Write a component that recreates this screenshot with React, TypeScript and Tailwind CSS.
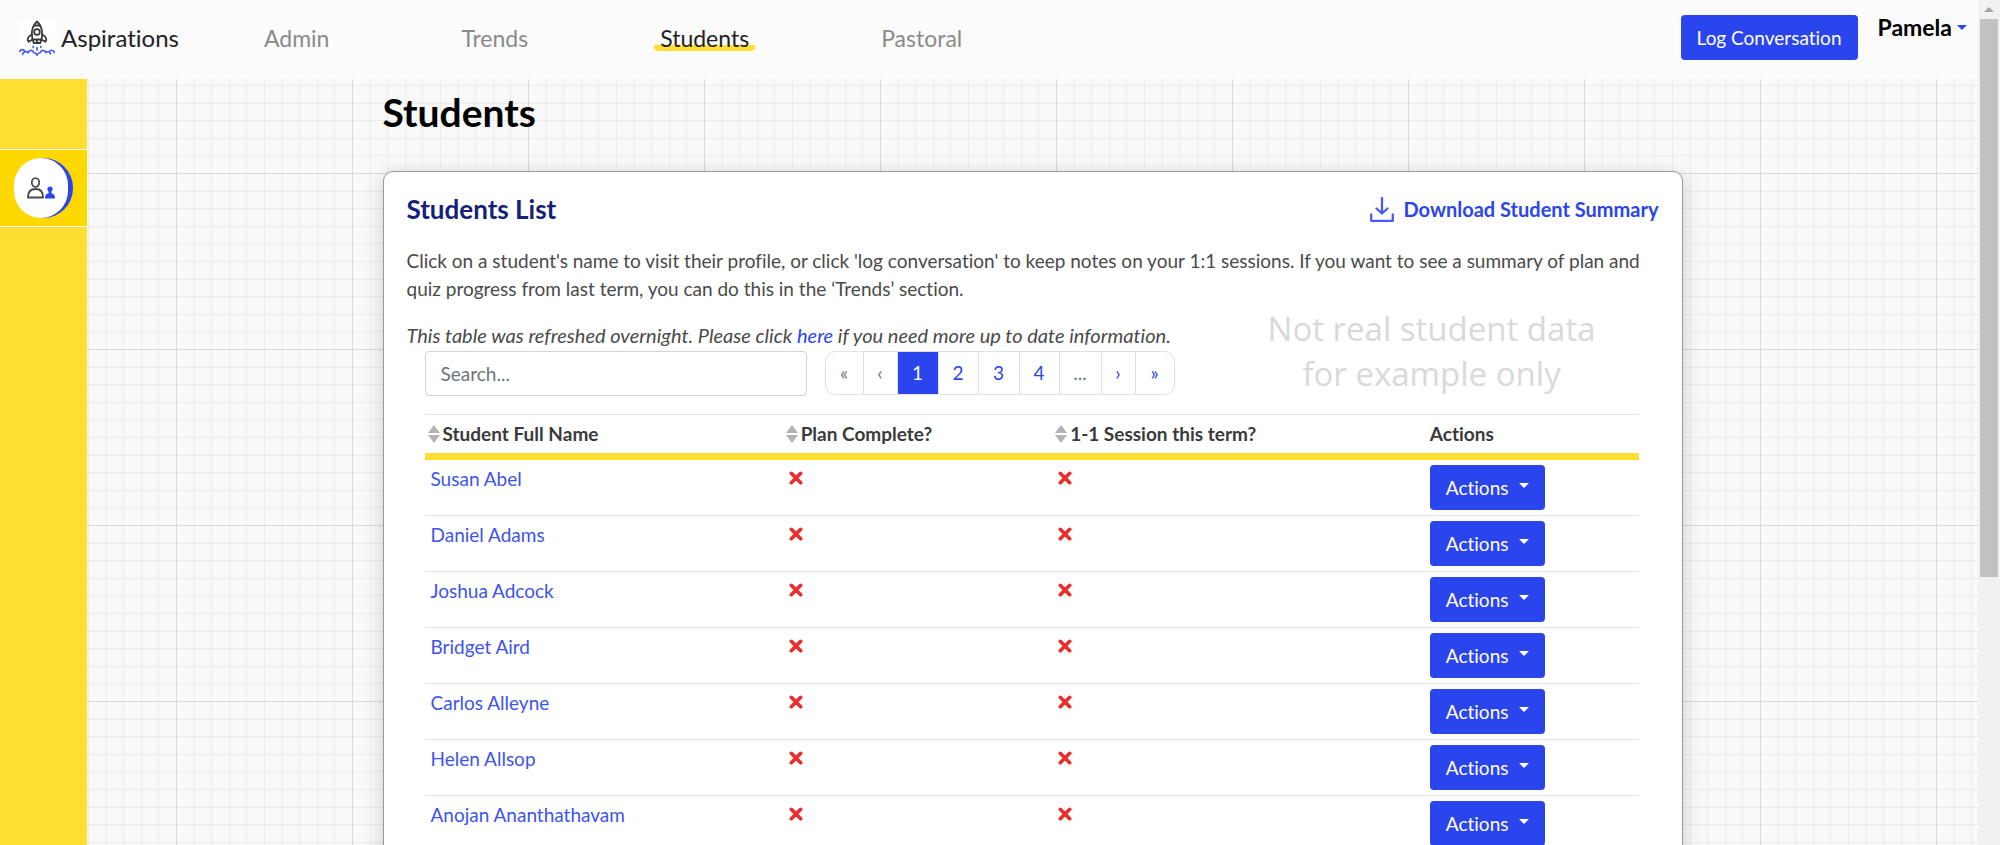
import { useState } from 'react'

interface Student {
  id: number
  name: string
  planComplete: boolean
  sessionThisTerm: boolean
}

const students: Student[] = [
  { id: 1, name: 'Susan Abel', planComplete: false, sessionThisTerm: false },
  { id: 2, name: 'Daniel Adams', planComplete: false, sessionThisTerm: false },
  { id: 3, name: 'Joshua Adcock', planComplete: false, sessionThisTerm: false },
  { id: 4, name: 'Bridget Aird', planComplete: false, sessionThisTerm: false },
  { id: 5, name: 'Carlos Alleyne', planComplete: false, sessionThisTerm: false },
  { id: 6, name: 'Helen Allsop', planComplete: false, sessionThisTerm: false },
  { id: 7, name: 'Anojan Ananthathavam', planComplete: false, sessionThisTerm: false }
]

const navItems = ['Admin', 'Trends', 'Students', 'Pastoral']

const pages = [
  { label: '«', name: 'First page', className: 'w-[38px] text-[#6c757d]' },
  { label: '‹', name: 'Previous page', className: 'w-[34px] text-[#6c757d]' },
  { label: '1', name: 'Page 1', className: 'w-[41px] bg-[#2b45ee] text-white' },
  { label: '2', name: 'Page 2', className: 'w-10 text-[#2b45ee]' },
  { label: '3', name: 'Page 3', className: 'w-[41px] text-[#2b45ee]' },
  { label: '4', name: 'Page 4', className: 'w-10 text-[#2b45ee]' },
  { label: '...', name: 'More pages', className: 'w-[42px] text-[#6c757d]' },
  { label: '›', name: 'Next page', className: 'w-[34px] text-[#2b45ee]' },
  { label: '»', name: 'Last page', className: 'w-[38px] text-[#2b45ee]' }
]

function RocketLogo() {
  return (
    <svg viewBox="0 0 36 36" className="size-9 shrink-0" fill="none" strokeLinecap="round" aria-hidden="true">
      <rect width="36" height="36" fill="#fff" />
      <g stroke="#3a3a3a" strokeWidth="1.8" strokeLinejoin="round">
        <path d="M18 1.500c-3.600 3.500-5.200 8-5.200 12.500 0 3.500.8 6.500 2 9h6.400c1.200-2.500 2-5.500 2-9 0-4.500-1.600-9-5.200-12.500z" />
        <path d="M15.200 5.500h5.600" />
        <circle cx="18" cy="12" r="2.800" />
        <path d="M13 14.500c-3 1.500-4.300 3.500-4.300 5.500l1 1.800 4-2.300" />
        <path d="M23 14.500c3 1.500 4.300 3.500 4.300 5.500l-1 1.800-4-2.300" />
        <path d="M14.200 19.500h7.600M18 19.500v3" />
      </g>
      <g stroke="#4a5cf0" strokeWidth="1.700">
        <path d="M14.200 26.500v1M18 27.500v2.500M21.800 26.500v1" />
        <path d="M.8 31.500c.5-2.500 4.500-2.500 4.700.2M3.500 34.500c.5-3 4-3.500 5.500-2 1.500-3 5-2.500 5.500 0 2 0 2.700 1 3.500 2.500.8-1.500 1.500-2.500 3.500-2.500.5-2.500 4-3 5.500 0 1.500-1.500 4-1 4.500 1.500M35.200 32.500c-.5-3-4.500-3-4.700 0" />
      </g>
    </svg>
  )
}

function PeopleIcon() {
  return (
    <svg viewBox="0 0 28 22" className="h-[22px] w-7" aria-hidden="true">
      <g fill="none" stroke="#4a4a4a" strokeWidth="1.800">
        <ellipse cx="8.500" cy="5.500" rx="3.700" ry="4.300" />
        <path d="M.9 20.500c0-5.500 3-8.500 7.600-8.500s7.600 3 7.600 8.500z" strokeLinejoin="round" />
      </g>
      <g fill="#2b45ee">
        <circle cx="23" cy="12" r="2.600" />
        <path d="M18 21.500c0-3.600 1.300-4.800 3.600-5.300v-2.200h2.800v2.200c2.300.5 3.600 1.700 3.600 5.300z" />
      </g>
    </svg>
  )
}

function DownloadIcon() {
  return (
    <svg viewBox="0 0 24 25" className="h-[25px] w-6" fill="none" stroke="#4a5cf0" strokeWidth="2.300" strokeLinecap="round" strokeLinejoin="round" aria-hidden="true">
      <path d="M12 1v15M6.500 11.500 12 16.500l5.500-5" />
      <path d="M1.200 17.500v6.300h21.600v-6.300" />
    </svg>
  )
}

function SortIcon() {
  return (
    <svg viewBox="0 0 12 18" className="h-[18px] w-3 shrink-0" fill="#b3b3b3" aria-hidden="true">
      <path d="M6 0l6 8H0zM6 18l6-8H0z" />
    </svg>
  )
}

function Caret({ className }: { className: string }) {
  return (
    <svg viewBox="0 0 10 5" className={className} fill="currentColor" aria-hidden="true">
      <path d="M0 0h10L5 5z" />
    </svg>
  )
}

function StatusMark({ done }: { done: boolean }) {
  if (done) {
    return <span>Yes</span>
  }
  return (
    <svg viewBox="0 0 14 14" className="my-[6px] ml-px size-[14px]" stroke="#ee2b2b" strokeWidth="3.600" strokeLinecap="round" role="img" aria-label="No">
      <path d="M2.300 2.300l9.400 9.400M11.700 2.300l-9.400 9.400" />
    </svg>
  )
}

function Header() {
  return (
    <header className="flex h-[79px] shrink-0 items-start justify-between bg-[#fbfbfb] pr-[11px] pl-[19px]">
      <div className="flex h-[75px] items-center">
        <a href="#home" className="flex items-center gap-[6px] text-2xl leading-[34px] text-[#222]">
          <RocketLogo />
          Aspirations
        </a>
        <nav className="ml-[79px] flex gap-[120px] text-[23px] leading-[26px]">
          {navItems.map((item) => (
            <a
              key={item}
              href={`#${item.toLowerCase()}`}
              className={
                item === 'Students'
                  ? 'rounded bg-linear-to-t from-[#ffde32] from-[6px] to-transparent to-[6px] px-[6px] text-[#222]'
                  : 'px-[6px] text-[#8a8a8a]'
              }
            >
              {item}
            </a>
          ))}
        </nav>
      </div>
      <div className="flex items-start gap-5">
        <button type="button" className="mt-[15px] h-[45px] rounded bg-[#2b45ee] px-4 text-[19px] text-white">
          Log Conversation
        </button>
        <button type="button" className="mt-[11px] flex items-center gap-[5px] text-[23px] leading-8 font-bold text-black">
          Pamela
          <Caret className="h-[5px] w-[10px] text-[#2b45ee]" />
        </button>
      </div>
    </header>
  )
}

function Sidebar() {
  return (
    <aside className="w-[87px] shrink-0 bg-[#ffde32] pt-[70px]">
      <a href="#students" aria-label="Students" className="flex h-[78px] items-center border-y border-white bg-[#ffd800] pl-[14px]">
        <span className="flex h-[60px] w-[59px] rounded-full bg-[#2b45ee]">
          <span className="flex h-[60px] w-[54px] items-center justify-center rounded-full bg-white">
            <PeopleIcon />
          </span>
        </span>
      </a>
    </aside>
  )
}

function StudentsTable({ rows }: { rows: Student[] }) {
  return (
    <table className="w-full table-fixed border-collapse">
      <thead>
        <tr className="border-t border-b-[7px] border-t-[#dee2e6] border-b-[#ffde32] text-left text-[#3a3a3a]">
          <th className="w-[29.5%] px-[3px] py-[5px] font-bold">
            <span className="flex items-center gap-[3px]"><SortIcon />Student Full Name</span>
          </th>
          <th className="w-[22.2%] px-[3px] py-[5px] font-bold">
            <span className="flex items-center gap-[3px]"><SortIcon />Plan Complete?</span>
          </th>
          <th className="w-[30.7%] px-[3px] py-[5px] font-bold">
            <span className="flex items-center gap-[3px]"><SortIcon />1-1 Session this term?</span>
          </th>
          <th className="px-[5px] py-[5px] font-bold">Actions</th>
        </tr>
      </thead>
      <tbody>
        {rows.map((student) => (
          <tr key={student.id} className="border-b border-[#dee2e6] align-top">
            <td className="px-[6px] py-[5px]">
              <a href={`#student-${student.id}`} className="text-[#3d53ee]">{student.name}</a>
            </td>
            <td className="px-[5px] py-[5px]"><StatusMark done={student.planComplete} /></td>
            <td className="px-[5px] py-[5px]"><StatusMark done={student.sessionThisTerm} /></td>
            <td className="px-[5px] py-[5px]">
              <button type="button" className="flex h-[45px] w-[115px] items-center justify-between rounded bg-[#2b45ee] px-4 text-[19px] text-white">
                Actions
                <Caret className="mb-1 h-[5px] w-[10px]" />
              </button>
            </td>
          </tr>
        ))}
      </tbody>
    </table>
  )
}

// Track and thumb beside the page content
function ScrollTrack() {
  return (
    <div className="flex w-[22px] shrink-0 flex-col items-center bg-[#f1f1f1]" aria-hidden="true">
      <div className="flex h-[19px] items-center">
        <Caret className="h-[5px] w-[10px] rotate-180 text-[#a3a3a3]" />
      </div>
      <div className="h-[66%] w-[18px] bg-[#c1c1c1]" />
    </div>
  )
}

function App() {
  const [search, setSearch] = useState('')

  const filtered = students.filter((student) =>
    student.name.toLowerCase().includes(search.toLowerCase())
  )

  return (
    <div className="flex h-screen overflow-hidden font-['Lato','Open_Sans',sans-serif] text-[19px] leading-7 text-[#4a4a4a] [font-variant-ligatures:no-common-ligatures]">
      <div className="flex min-w-0 flex-1 flex-col">
        <Header />
        <div className="flex min-h-0 flex-1 bg-[#f9f9f9] bg-[linear-gradient(90deg,#d9d9d9_1px,transparent_1px),linear-gradient(#d9d9d9_1px,transparent_1px),repeating-linear-gradient(90deg,#ececec_0_1px,transparent_1px_10%),repeating-linear-gradient(#ececec_0_1px,transparent_1px_10%)] bg-[length:176px_176px] bg-[position:0_94px]">
          <Sidebar />
          <main className="min-w-0 flex-1 overflow-y-auto px-8 pt-[11px] [scrollbar-width:none]">
            <div className="mx-auto max-w-[1300px]">
              <h1 className="text-[39px] leading-[44px] font-bold text-black">Students</h1>

              <section className="relative mt-[37px] rounded-[10px] border border-[#999] bg-white px-[23px] pt-[23px] pb-6 shadow-[0_4px_20px_rgba(0,0,0,0.18)]">
                <div className="flex items-center justify-between">
                  <h2 className="text-[26px] leading-7 font-bold text-[#151f7a]">Students List</h2>
                  <a href="#download" className="flex items-center gap-[10px] text-xl leading-7 font-bold text-[#2b45ee]">
                    <DownloadIcon />
                    Download Student Summary
                  </a>
                </div>

                <p className="mt-6">
                  Click on a student's name to visit their profile, or click 'log conversation' to keep notes on your 1:1 sessions. If you want to see a summary of plan and quiz progress from last term, you can do this in the ‘Trends’ section.
                </p>
                <p className="mt-[18px] mb-[2px] text-xl leading-7 italic">
                  This table was refreshed overnight. Please click <a href="#refresh" className="text-[#2b45ee]">here</a> if you need more up to date information.
                </p>

                {/* Watermark */}
                <p className="absolute top-[134px] right-[86px] text-center font-['Open_Sans',sans-serif] text-[33px] leading-[45px] text-[#d9d9d9]">
                  Not real student data<br />for example only
                </p>

                <div className="pr-5 pl-[18px]">
                  <div className="mb-[18px] flex gap-[18px]">
                    <input
                      type="text"
                      aria-label="Search students"
                      placeholder="Search..."
                      value={search}
                      onChange={(e) => setSearch(e.target.value)}
                      className="h-[45px] w-[382px] rounded border border-[#ced4da] bg-white px-[15px] placeholder:text-[#6c757d] focus:outline-none"
                    />
                    <div className="flex h-[44px] divide-x divide-[#dee2e6] overflow-hidden rounded-[10px] border border-[#dee2e6]">
                      {pages.map((page) => (
                        <button key={page.label} type="button" aria-label={page.name} className={page.className}>
                          {page.label}
                        </button>
                      ))}
                    </div>
                  </div>
                  <StudentsTable rows={filtered} />
                </div>
              </section>
            </div>
          </main>
        </div>
      </div>
      <ScrollTrack />
    </div>
  )
}

export default App
